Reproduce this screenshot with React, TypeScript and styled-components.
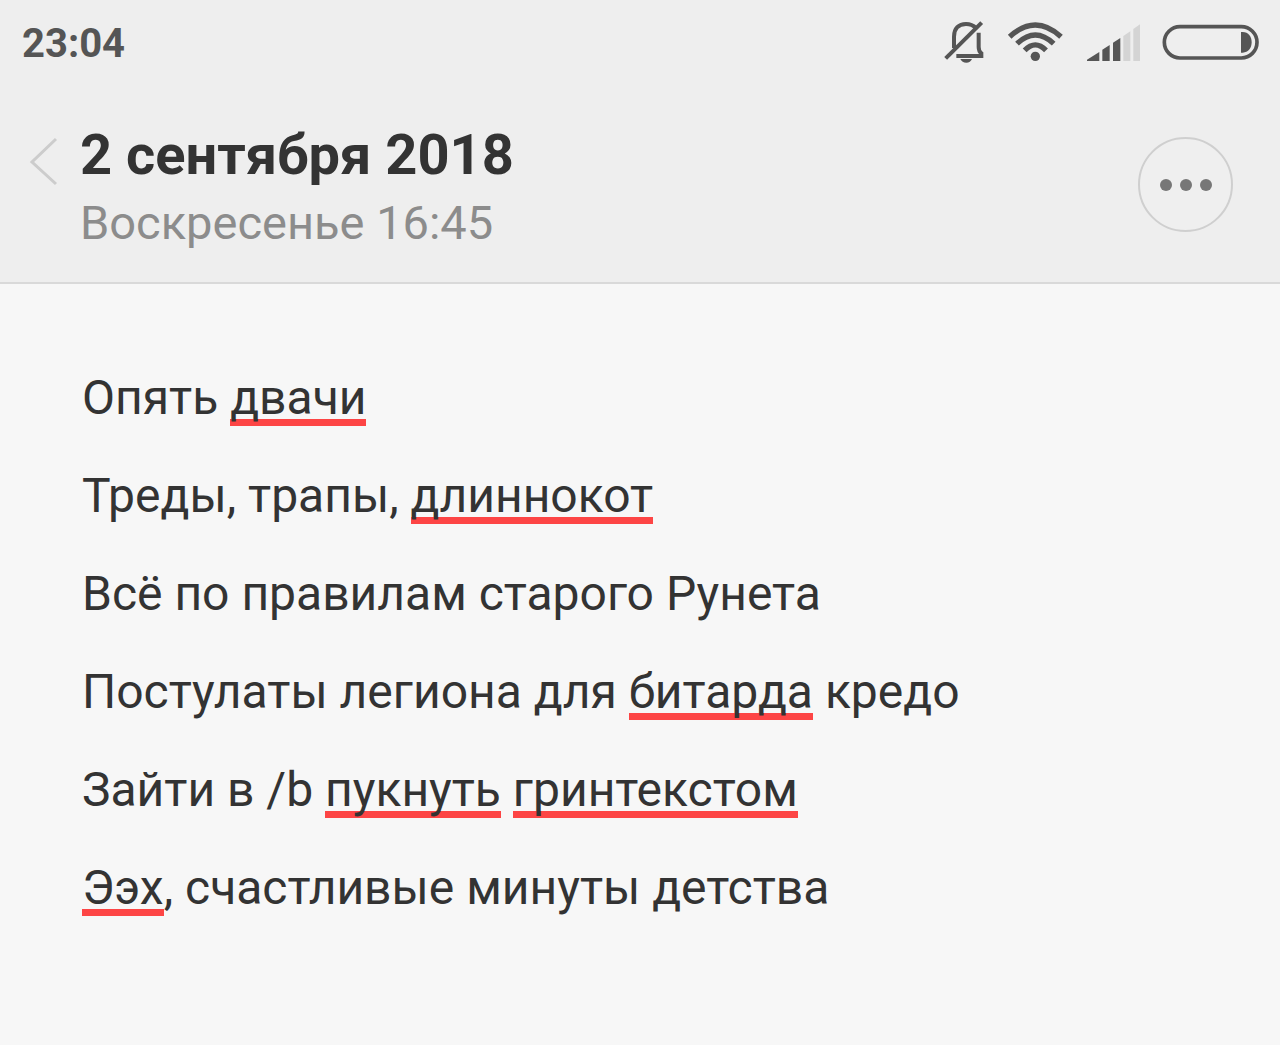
import React from "react";
import styled, { createGlobalStyle } from "styled-components";

const GlobalStyle = createGlobalStyle`
  * { box-sizing: border-box; }
  html { background: #f7f7f7; }
  body { margin: 0; background: #f7f7f7; font-family: Roboto, "Noto Sans", sans-serif; color: #333; }
`;
const Top = styled.header`
  background: #eee;
  border-bottom: 2px solid #d9d9d9;
  padding-bottom: 31px;
`;
const StatusBar = styled.div`
  display: flex;
  justify-content: space-between;
  align-items: center;
  height: 88px;
  padding: 0 21px 0 22px;
`;
const Clock = styled.time`
  font-size: 40px;
  font-weight: 700;
  line-height: 48px;
  color: #555;
`;
const Indicators = styled.div`
  display: flex;
  align-items: center;
  gap: 22px;
  color: #555;
`;
const Icon = styled.svg`
  display: block;
  height: 48px;
  fill: none;
  stroke: currentColor;
`;
const TitleBar = styled.div`
  display: flex;
  align-items: flex-start;
  padding: 35px 47px 0 28px;
`;
const BackButton = styled.button`
  border: 0;
  padding: 12px 0 0;
  width: 52px;
  background: none;
  line-height: 0;
  text-align: left;
  color: #ccc;
`;
const Heading = styled.div`
  flex: 1;
`;
const Title = styled.h1`
  margin: 0;
  font-size: 56px;
  line-height: 64px;
  font-weight: 700;
`;
const Subtitle = styled.p`
  margin: 8px 0 0;
  font-size: 47px;
  line-height: 56px;
  color: #8c8c8c;
`;
const MoreButton = styled.button`
  display: flex;
  align-items: center;
  justify-content: center;
  gap: 8px;
  margin-top: 14px;
  width: 95px;
  height: 95px;
  border: 2px solid #cfcfcf;
  border-radius: 50%;
  background: #efefef;
  padding: 0;
`;
const Dot = styled.span`
  width: 12px;
  height: 12px;
  border-radius: 50%;
  background: #777;
`;
const Note = styled.main`
  padding: 65px 82px;
`;
const Line = styled.p`
  margin: 0;
  font-size: 48px;
  line-height: 98px;
`;
const Misspelled = styled.span`
  background: linear-gradient(#fd4545, #fd4545) 0 100% / 100% 7px no-repeat;
`;

const lines: { text: string; wrong?: boolean }[][] = [
  [{ text: "Опять " }, { text: "двачи", wrong: true }],
  [{ text: "Треды, трапы, " }, { text: "длиннокот", wrong: true }],
  [{ text: "Всё по правилам старого Рунета" }],
  [{ text: "Постулаты легиона для " }, { text: "битарда", wrong: true }, { text: " кредо" }],
  [{ text: "Зайти в /b " }, { text: "пукнуть", wrong: true }, { text: " " }, { text: "гринтекстом", wrong: true }],
  [{ text: "Ээх", wrong: true }, { text: ", счастливые минуты детства" }],
];

const BellOff = () => (
  <Icon width="41" viewBox="42 30 123 144" strokeWidth="12" role="img" aria-label="Без звука">
    <path d="M47 145 155 38" />
    <path d="M72 114V80c0-25 14-38 36-38 13 0 22 4 30 12" />
    <path d="M146 68v43c0 10 3 15 8 19v8H79" />
    <path d="M91 147h35c-3 7-9 11-17 11s-15-4-18-11z" fill="currentColor" stroke="none" />
  </Icon>
);

const Wifi = () => (
  <Icon width="57" viewBox="231 30 171 144" strokeWidth="16" role="img" aria-label="Wi-Fi">
    <path d="M239 80q77-70 154 0" />
    <path d="M261 101q55-52 110 0" />
    <path d="M284 121q32-33 64 0" />
    <circle cx="316" cy="139" r="14" fill="currentColor" stroke="none" />
  </Icon>
);

const Signal = () => (
  <Icon width="54" viewBox="48 30 162 144" role="img" aria-label="Сигнал сети">
    <g fill="currentColor" stroke="none">
      <path d="M51 153v-4l37-23v27z" />
      <path d="M97 153v-34l22-14v48z" />
      <path d="M129 153V98l22-14v69z" />
    </g>
    <g fill="#d4d4d4" stroke="none">
      <path d="M160 153V78l21-14v89z" />
      <path d="M190 153V57l20-14v110z" />
    </g>
  </Icon>
);

const Battery = () => (
  <Icon width="97" viewBox="276 30 291 144" role="img" aria-label="Батарея">
    <rect x="283" y="50" width="278" height="94" rx="47" strokeWidth="11" />
    <path d="M513 66h5c17 0 27 14 27 31s-10 31-27 31h-5z" fill="currentColor" stroke="none" />
  </Icon>
);

export default function App() {
  return (
    <>
      <GlobalStyle />
      <Top>
        <StatusBar>
          <Clock>23:04</Clock>
          <Indicators>
            <BellOff />
            <Wifi />
            <Signal />
            <Battery />
          </Indicators>
        </StatusBar>
        <TitleBar>
          <BackButton aria-label="Назад">
            <svg width="30" height="52" viewBox="0 0 30 52">
              <path d="M28 4 4 27l24 22" fill="none" stroke="currentColor" strokeWidth="3" />
            </svg>
          </BackButton>
          <Heading>
            <Title>2 сентября 2018</Title>
            <Subtitle>Воскресенье 16:45</Subtitle>
          </Heading>
          <MoreButton aria-label="Ещё">
            <Dot />
            <Dot />
            <Dot />
          </MoreButton>
        </TitleBar>
      </Top>
      <Note>
        {lines.map((parts, i) => (
          <Line key={i}>
            {parts.map((p, j) => (p.wrong ? <Misspelled key={j}>{p.text}</Misspelled> : p.text))}
          </Line>
        ))}
      </Note>
    </>
  );
}
